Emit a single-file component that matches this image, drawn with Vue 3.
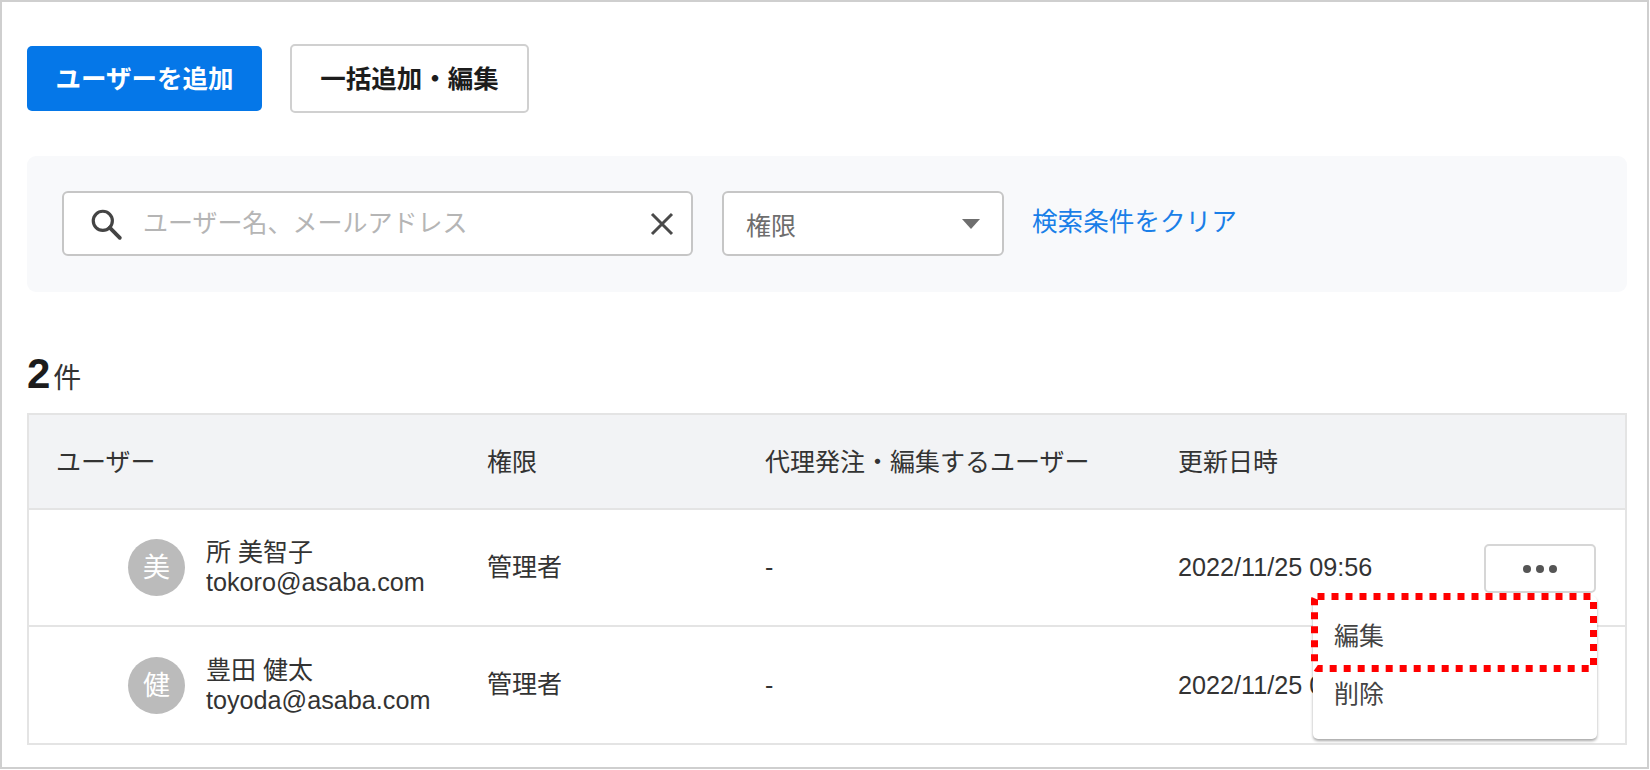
<script setup>
const columns = ['ユーザー', '権限', '代理発注・編集するユーザー', '更新日時']
const users = [
  { initial: '美', name: '所 美智子', email: 'tokoro@asaba.com', role: '管理者', proxy: '-', updated: '2022/11/25 09:56', more: true },
  { initial: '健', name: '豊田 健太', email: 'toyoda@asaba.com', role: '管理者', proxy: '-', updated: '2022/11/25 09:56', more: false },
]
</script>

<template>
  <main class="page">
    <div class="actions">
      <button class="btn primary">ユーザーを追加</button>
      <button class="btn secondary">一括追加・編集</button>
    </div>

    <section class="filters">
      <div class="search field">
        <svg class="search-icon" viewBox="0 0 32 32" width="34" height="34" fill="none" stroke="#444" stroke-width="3">
          <circle cx="13" cy="13" r="9" />
          <path d="M19.5 19.5 L29 29" stroke-width="3.6" stroke-linecap="round" />
        </svg>
        <span class="placeholder">ユーザー名、メールアドレス</span>
        <svg class="clear-icon" viewBox="0 0 24 24" width="24" height="24" fill="none" stroke="#4a4a4a" stroke-width="3">
          <path d="M2 2 L22 22 M22 2 L2 22" />
        </svg>
      </div>
      <div class="select field">
        <span class="select-label">権限</span>
        <span class="caret"></span>
      </div>
      <a class="clear-link">検索条件をクリア</a>
    </section>

    <p class="count"><strong>2</strong><span>件</span></p>

    <section class="table">
      <div class="row head">
        <div v-for="c in columns" :key="c" class="cell">{{ c }}</div>
      </div>
      <div v-for="u in users" :key="u.email" class="row body">
        <div class="cell user">
          <span class="avatar">{{ u.initial }}</span>
          <span class="user-text">
            <span>{{ u.name }}</span>
            <span class="latin">{{ u.email }}</span>
          </span>
        </div>
        <div class="cell role">{{ u.role }}</div>
        <div class="cell">{{ u.proxy }}</div>
        <div class="cell latin">{{ u.updated }}</div>
        <div v-if="u.more" class="more-wrap">
          <button class="more"><i></i><i></i><i></i></button>
          <div class="menu">
            <div class="menu-item first">編集</div>
            <div class="menu-item">削除</div>
            <svg class="highlight" width="286" height="79" viewBox="0 0 286 79" fill="none">
              <rect x="3.5" y="3.5" width="279" height="72" rx="3" stroke="#f00" stroke-width="7" stroke-dasharray="7 7" />
            </svg>
          </div>
        </div>
      </div>
    </section>
  </main>
</template>

<style>
html, body { margin: 0; background: #fff; }
</style>

<style scoped>
.page {
  box-sizing: border-box;
  width: 1649px;
  height: 769px;
  border: 2px solid #cfcfcf;
  padding: 42px 21px 0 25px;
  font-family: "Liberation Sans", "Noto Sans CJK JP", sans-serif;
  font-size: 25px;
  color: #333;
  background: #fff;
}
.latin { font-size: 25.2px; }
.actions { display: flex; align-items: center; gap: 28px; height: 69px; }
.btn {
  box-sizing: border-box;
  font: inherit;
  font-size: 25.5px;
  font-weight: 700;
  border-radius: 5px;
  padding: 0 0 4px;
}
.primary { width: 235px; height: 65px; border: 0; background: #0577e8; color: #fff; }
.secondary { width: 239px; height: 69px; border: 2px solid #d0d0d0; background: #fff; color: #1c1c1c; }

.filters {
  box-sizing: border-box;
  margin-top: 43px;
  height: 136px;
  width: 1600px;
  background: #f8f9fb;
  border-radius: 9px;
  padding: 35px 0 0 35px;
  display: flex;
  align-items: flex-start;
}
.field {
  box-sizing: border-box;
  height: 65px;
  background: #fff;
  border: 2px solid #c6c6c6;
  border-radius: 6px;
  display: flex;
  align-items: center;
}
.search { width: 631px; padding: 0 17px 0 25px; }
.search-icon { flex: none; }
.placeholder { margin: -6px 0 0 20px; font-size: 25px; color: #b5b5b5; flex: 1; }
.clear-icon { flex: none; }
.select { width: 282px; margin-left: 29px; padding: 0 22px 0 22px; justify-content: space-between; }
.select-label { color: #6e6e6e; font-size: 25px; }
.caret {
  width: 0; height: 0;
  border-left: 9px solid transparent;
  border-right: 9px solid transparent;
  border-top: 10px solid #6e6e6e;
}
.clear-link { margin: 14px 0 0 28px; font-size: 25.6px; color: #1a7fe8; line-height: 34px; }

.count { margin: 57px 0 0; height: 50px; display: flex; align-items: baseline; color: #1c1c1c; line-height: 50px; }
.count strong { font-size: 42px; }
.count span { font-size: 28px; margin-left: 3px; color: #333; }

.table {
  box-sizing: border-box;
  margin-top: 14px;
  width: 1600px;
  border: 2px solid #e4e4e4;
}
.row {
  position: relative;
  display: grid;
  grid-template-columns: 458px 278px 413px 1fr;
  align-items: center;
}
.head { height: 93px; background: #f2f3f5; border-bottom: 2px solid #e4e4e4; color: #333; }
.head .cell { padding-bottom: 4px; }
.body { height: 115px; }
.body + .body { height: 116px; border-top: 2px solid #e4e4e4; }
.cell { padding-left: 27px; white-space: nowrap; }
.head .cell:nth-child(n+2), .body .cell:nth-child(n+2) { padding-left: 0; }
.role { padding-bottom: 6px; }
.user { display: flex; align-items: center; padding-left: 99px; gap: 21px; }
.avatar {
  flex: none;
  box-sizing: border-box;
  width: 57px; height: 57px;
  padding-bottom: 4px;
  border-radius: 50%;
  background: #bbb;
  color: #fff;
  display: flex;
  align-items: center;
  justify-content: center;
  font-size: 27px;
}
.user-text { display: flex; flex-direction: column; line-height: 30px; margin-top: -1px; }
.more-wrap { position: absolute; top: 34px; right: 29px; z-index: 2; }
.more {
  box-sizing: border-box;
  width: 112px; height: 49px;
  background: #fff;
  border: 2px solid #d6d6d6;
  border-radius: 5px;
  display: flex;
  align-items: center;
  justify-content: center;
  gap: 5px;
  padding: 0;
}
.more i { width: 8px; height: 8px; border-radius: 50%; background: #555; }
.menu {
  position: absolute;
  top: 52px;
  right: -1px;
  width: 284px;
  height: 143px;
  background: #fff;
  border-radius: 5px;
  box-shadow: 0 2px 3px rgba(0, 0, 0, .35);
}
.menu-item { padding-left: 21px; height: 58px; line-height: 58px; color: #444; }
.menu-item.first { margin-top: 11px; }
.highlight { position: absolute; left: -2px; top: -3px; }
</style>
